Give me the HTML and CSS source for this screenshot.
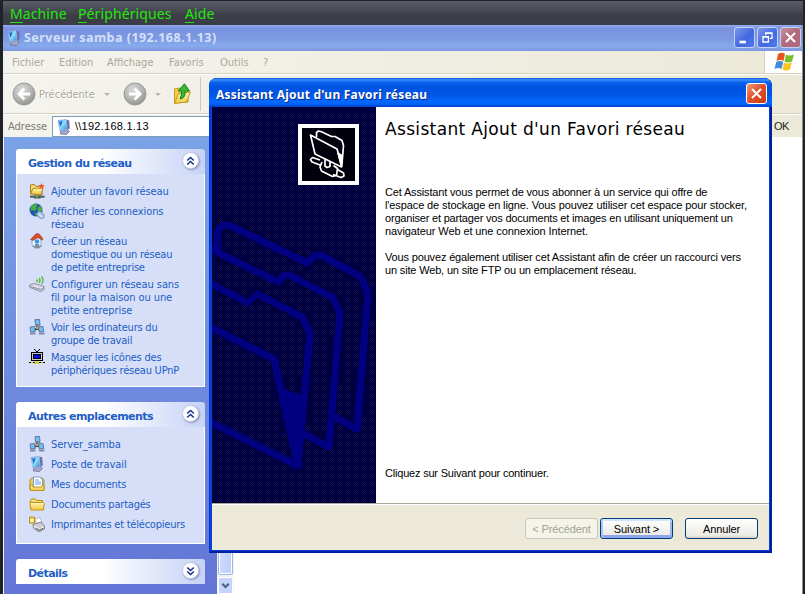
FILE: index.html
```html
<!DOCTYPE html>
<html lang="fr">
<head>
<meta charset="utf-8">
<title>Serveur samba</title>
<link rel="stylesheet" href="styles.css">
</head>
<body>
<svg width="0" height="0" class="defs">
  <defs>
    <linearGradient id="scr" x1="0" y1="0" x2="1" y2="1"><stop offset="0" stop-color="#2c7be0"/><stop offset=".45" stop-color="#8fe4fb"/><stop offset="1" stop-color="#2a78d4"/></linearGradient>
    <linearGradient id="fold" x1="0" y1="0" x2="0" y2="1"><stop offset="0" stop-color="#fff6b8"/><stop offset="1" stop-color="#f1c83f"/></linearGradient>
    <radialGradient id="nav" cx=".4" cy=".3" r=".75"><stop offset="0" stop-color="#dadada"/><stop offset=".6" stop-color="#b4b4b2"/><stop offset="1" stop-color="#8d8d8b"/></radialGradient>
    <pattern id="dither" width="2" height="2" patternUnits="userSpaceOnUse"><rect width="2" height="2" fill="#000"/><path d="M0 0h1v1H0zM1 1h1v1H1z" fill="#000080"/></pattern>
    <pattern id="dots" width="4" height="4" patternUnits="userSpaceOnUse"><rect width="4" height="4" fill="#000"/><path d="M0 0h1v1H0zM2 2h1v1H2z" fill="#000058"/></pattern>
  </defs>
  <symbol id="computer" viewBox="0 0 16 16">
    <path d="M4.500 12l6.500-1.500 2.500 2-3 3-6-.5z" fill="#a3a6ca" stroke="#66679a" stroke-width=".7"/>
    <path d="M2 1.500l8-1 1.300 9.700L4 12z" fill="url(#scr)" stroke="#9db0de" stroke-width=".8"/>
    <path d="M10.500.5l2.700 1 .5 8-2.200 1.500z" fill="#6a6eaa"/>
    <path d="M3.500 3l3-.5L4.500 8z" fill="#1f63c8"/>
  </symbol>
  <symbol id="folder" viewBox="0 0 16 16">
    <path d="M1.500 13V4.500l1-1.500h4l1.500 1.500h5.500V13z" fill="#f7db72" stroke="#b88a17"/>
    <path d="M.8 6.500h13.500l1 1-1 6.500H2z" fill="url(#fold)" stroke="#bd921d"/>
  </symbol>
  <symbol id="docs" viewBox="0 0 16 16">
    <path d="M1 14V4l2-2h10l2 2v10z" fill="#f3cf5a" stroke="#b88a17"/>
    <path d="M4.500 1h6l3 2.500V12h-9z" fill="#fff" stroke="#6d9bd8"/>
    <path d="M6 4h4M6 6h6M6 8h6" stroke="#5fa0e0"/>
    <path d="M1 9h3v2h9V9h2v5.500H1.500z" fill="url(#fold)" stroke="#bd921d"/>
  </symbol>
  <symbol id="favori" viewBox="0 0 16 16">
    <path d="M1.500 11V2l4-.5 1.500 2 6-.5v9z" fill="#f7db72" stroke="#a87c20"/>
    <path d="M1.500 11l2.500-5.500 10-.5-2 6.500z" fill="url(#fold)" stroke="#b58a28"/>
    <path d="M12.500 0l.9 2.100 2.300.2-1.600 1.500.5 2.200-2.100-1.200-2 1.200.5-2.200-1.600-1.500 2.200-.2z" fill="#ef5b22"/>
    <path d="M1 13.700h14.500" stroke="#505458" stroke-width="2"/><path d="M5 12.500h6.500v3H5z" fill="#4b6254"/><path d="M7 13h2v1.500H7z" fill="#53c543"/>
  </symbol>
  <symbol id="globe" viewBox="0 0 16 16">
    <circle cx="7" cy="7" r="6.500" fill="#1f56b0"/>
    <path d="M2 3l4-2.500L9 2 7 4l1 2-3 2-2-1-1.500 1zM9 4l3-1 1.400 4L11 9.500 8.500 8zM5 10l3 .5.500 2.500-2-.5z" fill="#4fae40"/>
    <path d="M8 12c-1-3 2-4.500 4-3 3 1 4 4 2.500 6-2 1.500-5 0-6.500-3z" fill="#a9c5ec" stroke="#6488c0" stroke-width=".8"/>
    <path d="M9.500 11l3.500 3" stroke="#fff"/>
  </symbol>
  <symbol id="home" viewBox="0 0 16 16">
    <path d="M3 13l7-1.500 3 1.500-3 2.500H6z" fill="#8b8d9c"/>
    <path d="M3 6l4-3 5 3v6.500l-5 1.500-4-2z" fill="#edf4fb" stroke="#7c92ac" stroke-width=".7"/>
    <path d="M1.500 6.500L7 .8h3l4 5-1 1.400L9 4.500 4 7.500z" fill="#d84d27" stroke="#8c3c30" stroke-width=".6"/>
    <circle cx="8" cy="8.500" r="2.300" fill="#329ae8"/><path d="M6 11h4v3H6z" fill="#6c91bd"/>
  </symbol>
  <symbol id="wifi" viewBox="0 0 16 16">
    <path d="M.5 9l5-1.500L15 10.500v3l-3 2L1 11.500z" fill="#dcdde7" stroke="#77798f" stroke-width=".8"/>
    <path d="M1 10.500l11 3 3-2" fill="none" stroke="#8c8ea3"/>
    <path d="M7.500 3.500l1 1-1 1.500M10 2q2 2 0 5M12.500.5q3 3.500 0 7.500" fill="none" stroke="#4eb629" stroke-width="1.300"/>
  </symbol>
  <symbol id="network" viewBox="0 0 16 16">
    <path d="M8 6v4M8 9l-4 3M8 9l5 3" stroke="#40424e" stroke-width="2"/>
    <path d="M6 .7l4.500-.2.5 5H6.500zM1 8l4.500-.5.7 5-4.500.5zM9.500 8l4.500-.5.7 5-4.500.5z" fill="#6cc4f0" stroke="#5a6ca0" stroke-width=".9"/>
    <path d="M6 6.500h5.500M1 14.500h5.500M10 14.500h5.500" stroke="#8286aa" stroke-width="2"/>
    <path d="M7 8h2v2H7z" fill="#e1a43a"/>
  </symbol>
  <symbol id="upnp" viewBox="0 0 16 16" shape-rendering="crispEdges">
    <path d="M5 0h1v1H5zM10 0h1v1h-1zM6 1h1v1H6zM9 1h1v1H9zM7 2h2v1H7zM2 3h12v9H2zM0 13h16v1H0z" fill="#000"/>
    <path d="M3 4h10v7H3z" fill="#c8c8c8"/><path d="M4 5h8v5H4z" fill="#000"/><path d="M5 6h6v3H5z" fill="#0010e8"/>
    <path d="M7 12h2v1H7zM6 13h4v2H6z" fill="#d9d515"/><path d="M2 13h2v1H2zM12 13h2v1h-2z" fill="#d9d515"/>
  </symbol>
  <symbol id="printer" viewBox="0 0 16 16">
    <path d="M.5 1h5v6h-5z" fill="#f5cf50" stroke="#bd921d"/><path d="M1.500 3h3v3h-3z" fill="#fff3ad"/>
    <path d="M6 3l5-1.500 2 5-5 2z" fill="#fff" stroke="#9da6b0" stroke-width=".7"/>
    <path d="M4 8.500l8-2.500 3.500 4v3l-5.500 3-5.500-4z" fill="#cccdd6" stroke="#6d6e7d" stroke-width=".8"/>
    <path d="M5 10l5.500 3 4-2" fill="none" stroke="#fff"/><path d="M7 12l3 2.200 4-2" stroke="#545461" fill="none"/>
  </symbol>
  <symbol id="flag" viewBox="0 0 20 20">
    <path d="M4 2q4-2.500 7 0L9.500 9q-3-2-7 0z" fill="#e8541f"/>
    <path d="M12 2.500q3 2 8 0L18 9.500q-4 2-7.500 0z" fill="#79bd28"/>
    <path d="M2.200 10q3.500-2 7 0L7.500 17q-3-2-7 0z" fill="#3f8be0"/>
    <path d="M10 10.500q4 2 7.800 0L16 17.500q-4 2-7.500 0z" fill="#f7c51d"/>
  </symbol>
  <symbol id="up" viewBox="0 0 9 10"><path d="M1.200 4.500l3.300-3 3.300 3M1.200 8.500l3.300-3 3.300 3" fill="none" stroke="#102f90" stroke-width="1.500"/></symbol>
  <symbol id="down" viewBox="0 0 9 10"><path d="M1.200 1.500l3.300 3 3.300-3M1.200 5.500l3.300 3 3.300-3" fill="none" stroke="#102f90" stroke-width="1.500"/></symbol>
</svg>

<div class="vm">
  <nav class="vm-menu"><span class="m1"><u>M</u>achine</span><span class="m2"><u>P</u>ériphériques</span><span class="m3"><u>A</u>ide</span></nav>
  <div class="explorer">
    <header class="titlebar">
      <svg class="i16"><use href="#computer"/></svg>
      <h1>Serveur samba (192.168.1.13)</h1>
      <button class="wb"><svg viewBox="0 0 21 21"><path d="M5 14h7v3H5z" fill="#fff"/></svg></button>
      <button class="wb"><svg viewBox="0 0 21 21"><path d="M8.500 8V5.500h7v6H13M8 6h8" fill="none" stroke="#fff" stroke-width="1.400"/><path d="M5.500 9.500h6v6h-6zM5 10h7" fill="none" stroke="#fff" stroke-width="1.500"/></svg></button>
      <button class="wb close"><svg viewBox="0 0 21 21"><path d="M5.500 5.500l10 10M15.500 5.500l-10 10" stroke="#fff" stroke-width="2.200"/></svg></button>
    </header>
    <nav class="menubar">
      <span class="f1">Fichier</span><span class="f2">Edition</span><span class="f3">Affichage</span><span class="f4">Favoris</span><span class="f5">Outils</span><span>?</span>
      <div class="brand"><svg width="20" height="20"><use href="#flag"/></svg></div>
    </nav>
    <div class="toolbar">
      <svg class="navb" viewBox="0 0 24 24"><circle cx="12" cy="12" r="11" fill="url(#nav)" stroke="#999"/><path d="M12.500 6.500L7 12l5.500 5.500M7.500 12H18" fill="none" stroke="#fff" stroke-width="2.800"/></svg>
      <span class="prev">Précédente</span><i class="caret"></i>
      <svg class="navb fwd" viewBox="0 0 24 24"><circle cx="12" cy="12" r="11" fill="url(#nav)" stroke="#999"/><path d="M11.500 6.500L17 12l-5.500 5.500M16.500 12H6" fill="none" stroke="#fff" stroke-width="2.800"/></svg>
      <i class="caret c2"></i>
      <svg class="upf" viewBox="0 0 20 22"><path d="M1.500 20V6l5-1 1.500 2 7-1v13z" fill="#f2cc50" stroke="#c39a22"/><path d="M1.500 20.500l4-10 12-1.500-4 10z" fill="url(#fold)" stroke="#c39a22"/><path d="M7 16q6-1 5-8h4.500L11.500.8 5 8h3.500q.500 4-1.500 8z" fill="#37b934" stroke="#16831d"/></svg>
      <i class="sep"></i>
    </div>
    <div class="address"><span>Adresse</span><div class="field"><svg class="i16"><use href="#computer"/></svg>\\192.168.1.13</div><b>OK</b></div>
    <div class="content">
      <aside>
        <section>
          <h2>Gestion du réseau<i class="chev"><svg><use href="#up"/></svg></i></h2>
          <ul>
            <li><svg class="i16"><use href="#favori"/></svg><span class="wide">Ajouter un favori réseau</span></li>
            <li><svg class="i16"><use href="#globe"/></svg><span class="wide">Afficher les connexions<br>réseau</span></li>
            <li><svg class="i16"><use href="#home"/></svg><span>Créer un réseau<br>domestique ou un réseau<br>de petite entreprise</span></li>
            <li><svg class="i16"><use href="#wifi"/></svg><span class="wide">Configurer un réseau sans<br>fil pour la maison ou une<br>petite entreprise</span></li>
            <li><svg class="i16"><use href="#network"/></svg><span>Voir les ordinateurs du<br>groupe de travail</span></li>
            <li><svg class="i16"><use href="#upnp"/></svg><span>Masquer les icônes des<br>périphériques réseau UPnP</span></li>
          </ul>
        </section>
        <section>
          <h2>Autres emplacements<i class="chev"><svg><use href="#up"/></svg></i></h2>
          <ul>
            <li><svg class="i16"><use href="#network"/></svg><span class="wide">Server_samba</span></li>
            <li><svg class="i16"><use href="#computer"/></svg><span class="wide">Poste de travail</span></li>
            <li><svg class="i16"><use href="#docs"/></svg><span>Mes documents</span></li>
            <li><svg class="i16"><use href="#folder"/></svg><span>Documents partagés</span></li>
            <li><svg class="i16"><use href="#printer"/></svg><span>Imprimantes et télécopieurs</span></li>
          </ul>
        </section>
        <section><h2>Détails<i class="chev"><svg><use href="#down"/></svg></i></h2></section>
      </aside>
      <div class="scroll"><div class="thumb"></div><div class="arrow"><svg viewBox="0 0 14 14"><path d="M3.500 5l3.500 3.500L10.500 5" fill="none" stroke="#4d6185" stroke-width="2.300"/></svg></div></div>
    </div>
  </div>
</div>

<div class="dialog">
  <header><h1>Assistant Ajout d'un Favori réseau</h1><button class="dclose"><svg viewBox="0 0 21 21"><path d="M5.500 5.500l10 10M15.500 5.500l-10 10" stroke="#fff" stroke-width="2.200"/></svg></button></header>
  <div class="page">
    <div class="art">
      <svg class="mark" viewBox="212 107 164 396" shape-rendering="crispEdges">
        <rect x="212" y="107" width="164" height="396" fill="url(#dither)"/>
        <g fill="none" stroke="#000080" stroke-width="7" stroke-linejoin="round">
          <path d="M210 248l7 4 1-21 5-6 6 0 78 38 8-8 6 0 40 22 7 16-11 136-24-13"/>
          <path d="M215 251l63 31 9-8 45 23 8 15-11 135-27-14"/>
          <path d="M208 282l40 21 9-9 45 23 8 16-12 133"/>
          <path d="M208 326l66 33 7 33 17 74-90-45"/>
        </g>
        <path d="M278 384l6 5 17 6-3 71z" fill="#000080"/>
      </svg>
      <div class="emblem"><svg viewBox="0 0 53 53"><rect width="53" height="53" fill="url(#dots)" shape-rendering="crispEdges"/><g fill="none" stroke="#fff" stroke-width="1.700" stroke-linejoin="round">
        <path d="M8.500 7l26.500 14 1.500 5 3 13L13 26z"/><path d="M14.500 9l0-4.500 2-1.500 3 .8 10 4.700h3.500l7 4 1.500 5-1.800 21.500"/>
        <path d="M36 25l3.500 12 .8-9z" fill="#fff"/>
        <path d="M18 32l-7.500-2.500-2 2 1.500 2.500 8 3M23 31v7l2 1.500 3-1v-5M20 34l-2 5 1.500 4 11 5.500 4-1 1-7-4-3M35.500 41.500l6 3.500.5 3-3 1.500-8-3"/></g></svg></div>
    </div>
    <div class="copy">
      <h2>Assistant Ajout d'un Favori réseau</h2>
      <p><span class="l1">Cet Assistant vous permet de vous abonner à un service qui offre de</span><br><span class="l2">l'espace de stockage en ligne. Vous pouvez utiliser cet espace pour stocker,</span><br><span class="l3">organiser et partager vos documents et images en utilisant uniquement un</span><br><span class="l4">navigateur Web et une connexion Internet.</span></p>
      <p><span class="l1">Vous pouvez également utiliser cet Assistant afin de créer un raccourci vers</span><br><span class="l1">un site Web, un site FTP ou un emplacement réseau.</span></p>
      <p class="go">Cliquez sur Suivant pour continuer.</p>
    </div>
  </div>
  <footer><button class="btn off">&lt; Précédent</button><button class="btn def">Suivant &gt;</button><button class="btn cancel">Annuler</button></footer>
</div>
</body>
</html>
```
FILE: styles.css
```css
* { box-sizing: border-box; }
body { margin: 0; width: 805px; height: 594px; overflow: hidden; background: #1f2227; position: relative; font: 11px/13px "DejaVu Sans Condensed", "DejaVu Sans", sans-serif; }
h1, h2, p, ul { margin: 0; padding: 0; }
span, h1, h2, p, b { white-space: nowrap; }
button { padding: 0; font: inherit; }
.defs { position: absolute; }
.i16 { width: 16px; height: 16px; flex: none; display: block; }
.vm { height: 594px; padding: 1px 2px 0 3px; display: flex; flex-direction: column; }
.vm-menu { height: 24px; background: linear-gradient(#5b5e67, #3c3e47 60%, #3b3d46); display: flex; padding-left: 7px; font: 14px/26px "Noto Sans", sans-serif; color: #22e80c; letter-spacing: .1px; }
.m1 { width: 68px; } .m2 { width: 107px; }
.vm-menu u { text-underline-offset: 3px; text-decoration-thickness: 1px; }
.explorer { flex: 1; display: flex; flex-direction: column; border-right: 1px solid #8f8f92; min-height: 0; }
.titlebar { height: 26px; flex: none; display: flex; align-items: center; padding: 0 1px 1px 3px; background: linear-gradient(#96aef0 0, #7b92df 12%, #7c98e3 50%, #86abed 80%, #7f96df); }
.titlebar h1 { flex: 1; margin-left: 2px; font: bold 12.500px/24px "Noto Sans", sans-serif; color: #d5e0f9; letter-spacing: .47px; padding-top: 1px; }
.wb { width: 21px; height: 21px; margin-left: 2px; border: 1px solid #c5d1f5; border-radius: 3px; background: linear-gradient(135deg, #7b98ec, #4468df 55%, #4b7bea); display: block; }
.wb svg, .dclose svg { width: 19px; height: 19px; display: block; }
.wb.close { background: linear-gradient(135deg, #c591a4, #b2687a 50%, #ae6a80); }
.menubar { height: 23px; flex: none; display: flex; line-height: 23px; color: #aca899; background: linear-gradient(90deg, #f4f3ee, #ece9d8); border-bottom: 1px solid #d5d1c0; padding-left: 9px; }
.f1 { width: 47px; } .f2 { width: 48px; } .f3 { width: 62px; } .f4 { width: 51px; } .f5 { width: 43px; }
.brand { margin-left: auto; width: 38px; background: #fff; border-left: 1px solid #d5d1c0; padding: 1px 0 0 9px; }
.toolbar { height: 40px; flex: none; display: flex; align-items: center; padding: 0 0 0 9px; border-top: 1px solid #fff; border-bottom: 1px solid #d5d1c0; background: linear-gradient(90deg, #f4f3ee, #ece9d8); color: #aca899; }
.navb { width: 24px; height: 24px; }
.prev { margin-left: 3px; width: 58px; text-shadow: 1px 1px #fff; }
.caret { border: 3px solid transparent; border-top-color: #b9b6a8; border-bottom: 0; margin-left: 7px; }
.fwd { margin-left: 13px; } .c2 { margin-left: 8px; }
.upf { width: 20px; height: 22px; margin-left: 12px; }
.sep { width: 1px; height: 34px; background: #cfcbb9; margin-left: 7px; }
.address { height: 23px; flex: none; display: flex; align-items: center; background: linear-gradient(90deg, #f4f3ee, #ece9d8); border-top: 1px solid #fff; color: #7e7b70; padding-left: 5px; }
.address > span { width: 44px; }
.field { width: 716px; height: 21px; border: 1px solid #7f9db9; background: #fff; color: #000; display: flex; align-items: center; gap: 3px; padding: 1px 0 0 3px; font-family: "Liberation Sans", sans-serif; letter-spacing: .25px; }
.address b { margin-left: 6px; font-weight: 400; color: #222; font-family: "Liberation Sans", sans-serif; letter-spacing: -.5px; }
.content { flex: 1; display: flex; background: #fff; min-height: 0; overflow: hidden; border-left: 1px solid #f4f4f4; }
aside { width: 213px; padding: 12px 12px 0; background: linear-gradient(#7ba2e7, #6375d6); display: flex; flex-direction: column; gap: 15px; }
section { width: 189px; }
section h2 { height: 25px; border-radius: 3px 3px 0 0; background: linear-gradient(90deg, #fff 0, #fff 45%, #c6d3f7); color: #215dc6; font: bold 11px/29px "DejaVu Sans", sans-serif; padding: 0 6px 0 12px; display: flex; justify-content: space-between; letter-spacing: -.55px; }
.chev { width: 17px; height: 17px; margin-top: 3px; border-radius: 50%; border: 1px solid #c3cbe6; background: #fff; box-shadow: 1px 1px 2px #8793b8; display: flex; align-items: center; justify-content: center; }
.chev svg { width: 9px; height: 10px; }
ul { list-style: none; background: #d6dff7; border: 1px solid #fff; border-top: 0; padding: 9px 0 11px 12px; display: grid; gap: 4px; color: #215dc6; }
li { display: flex; gap: 6px; min-height: 16px; }
li span { padding-top: 2px; margin-bottom: -2px; letter-spacing: -.22px; }
li .wide { letter-spacing: -.08px; }
.scroll { width: 17px; background: #f3f3ef; display: flex; flex-direction: column; align-items: center; }
.thumb { flex: 1; width: 15px; border: 1px solid #9fb5e8; border-radius: 2px; background: linear-gradient(90deg, #cddbff, #bccefc); box-shadow: inset 0 0 0 1px #fff; }
.arrow { width: 15px; height: 17px; margin-top: 2px; border: 1px solid #fff; background: #c5d4fc; }
.arrow svg { display: block; width: 13px; height: 15px; }

.dialog { position: absolute; left: 209px; top: 78px; width: 563px; height: 475px; border-radius: 8px 8px 0 0; background: #0543d6; padding: 0 3px 3px; display: flex; flex-direction: column; box-shadow: inset 1px 0 #0831d9, inset -2px -2px #001ea0; overflow: hidden; }
.dialog header { height: 29px; flex: none; margin: 0 -3px; padding: 1px 5px 0 7px; display: flex; align-items: center; background: linear-gradient(#0a4bd0 0, #3a90ff 6%, #0a62ee 15%, #0054e3 30%, #0055e5 55%, #0468fd 80%, #0263f8 90%, #0240c0); }
.dialog header h1 { flex: 1; color: #fff; font: bold 12px/26px "Noto Sans", sans-serif; text-shadow: 1px 1px #0b2a86; letter-spacing: .22px; padding-top: 3px; }
.dclose { width: 21px; height: 21px; border: 1px solid #fff; border-radius: 3px; background: linear-gradient(135deg, #f09a80, #e2532e 45%, #c93c10); }
.page { height: 396px; display: flex; background: #fff; }
.art { width: 164px; position: relative; background: #000040; padding: 17px 0 0 86px; }
.mark { position: absolute; left: 0; top: 0; width: 164px; height: 396px; }
.emblem { position: relative; width: 61px; height: 61px; border: 4px solid #fff; background: #000; }
.emblem svg { width: 53px; height: 53px; display: block; }
.copy { flex: 1; padding: 11px 0 0 9px; display: flex; flex-direction: column; font: 11px/13px "Liberation Sans", sans-serif; color: #000; }
.copy h2 { font: 17px/22px "DejaVu Sans", sans-serif; letter-spacing: .34px; margin-bottom: 45px; }
.copy p { height: 52px; flex: none; margin-bottom: 13px; padding-top: 1px; }
.l1 { letter-spacing: -.16px; } .l2 { letter-spacing: -.11px; } .l3 { letter-spacing: -.19px; } .l4 { letter-spacing: -.1px; }
.copy .go { height: 14px; margin: 151px 0 0; padding-top: 1px; letter-spacing: -.2px; }
footer { flex: 1; display: flex; background: #ece9d8; border-top: 1px solid #aca899; box-shadow: inset 0 1px #fff; justify-content: flex-end; padding: 14px 11px 0; }
.btn { width: 73px; height: 21px; border: 1px solid #003c74; border-radius: 3px; background: linear-gradient(#fff, #ecebe5 85%, #d6d0c5); font: 11px/21px "Liberation Sans", sans-serif; letter-spacing: -.1px; color: #000; white-space: nowrap; }
.off { border-color: #c9c7ba; background: #f5f4ea; color: #a1a192; }
.def { margin-left: 2px; box-shadow: inset 0 2px #cee7ff, inset 2px 0 #a9c5f5, inset -2px 0 #9ab8f0, inset 0 -3px #8ea6ee; }
.cancel { margin-left: 12px; }
```
